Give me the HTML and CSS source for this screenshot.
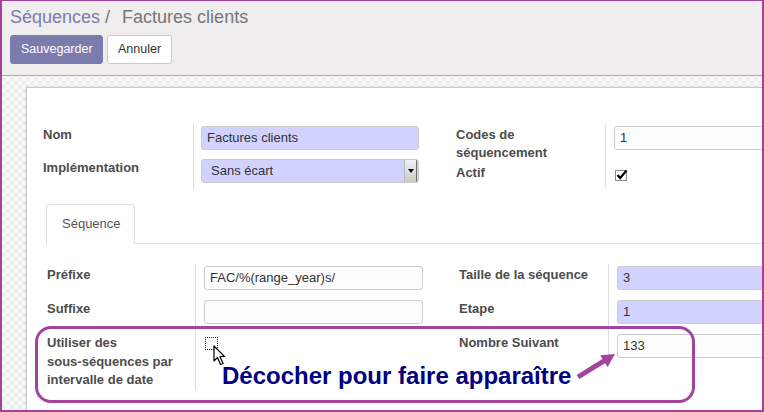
FILE: index.html
```html
<!DOCTYPE html>
<html lang="fr">
<head>
<meta charset="utf-8">
<title>Séquences / Factures clients</title>
<link rel="stylesheet" href="styles.css">
</head>
<body>
<div class="frame">
  <header class="cp">
    <div class="bc"><span class="bc-link">Séquences</span> /<span class="bc-cur">Factures clients</span></div>
    <div class="btns">
      <button class="btn btn-primary">Sauvegarder</button>
      <button class="btn">Annuler</button>
    </div>
  </header>
  <main class="view">
    <div class="sheet">
      <div class="groups g-top">
        <div class="grp grp-l">
          <div class="lbl">Nom</div>
          <div class="fld"><div class="inp req">Factures clients</div></div>
          <div class="lbl">Implémentation</div>
          <div class="fld">
            <div class="inp req sel"><span class="sel-txt">Sans écart</span><span class="sel-btn"><span class="tri"></span></span></div>
          </div>
        </div>
        <div class="grp grp-r">
          <div class="lbl">Codes de séquencement</div>
          <div class="fld"><div class="inp">1</div></div>
          <div class="lbl">Actif</div>
          <div class="fld">
            <svg class="chk" width="13" height="12" viewBox="0 0 13 12"><rect x="0.5" y="1.5" width="11" height="10" fill="#fff" stroke="#8a8a8a"/><polyline points="2.5,6 5.2,9 11.5,1.5" fill="none" stroke="#000" stroke-width="2.2"/></svg>
          </div>
        </div>
      </div>
      <div class="nb">
        <ul class="tabs"><li class="tab">Séquence</li></ul>
        <div class="pane">
          <div class="groups">
            <div class="grp grp2-l">
              <div class="lbl">Préfixe</div>
              <div class="fld"><div class="inp w219">FAC/%(range_year)s/</div></div>
              <div class="lbl">Suffixe</div>
              <div class="fld"><div class="inp w219"></div></div>
              <div class="lbl"><span class="ln">Utiliser des</span><span class="ln">sous-séquences par</span><span class="ln">intervalle de date</span></div>
              <div class="fld"><div class="cb-focus"></div></div>
            </div>
            <div class="grp grp2-r">
              <div class="lbl">Taille de la séquence</div>
              <div class="fld"><div class="inp req">3</div></div>
              <div class="lbl">Etape</div>
              <div class="fld"><div class="inp req">1</div></div>
              <div class="lbl">Nombre Suivant</div>
              <div class="fld"><div class="inp">133</div></div>
            </div>
          </div>
        </div>
      </div>
    </div>
  </main>
  <div class="annot"></div>
  <div class="annot-text">Décocher pour faire apparaître</div>
  <svg class="annot-arrow" width="52" height="40" viewBox="0 0 52 40"><line x1="8" y1="32" x2="36" y2="14.6" stroke="#a3439e" stroke-width="5"/><polygon points="45,9 37.6,22 30.2,10.2" fill="#a3439e"/></svg>
  <svg class="cursor" width="13" height="21" viewBox="0 0 13 21"><path d="M1 1 L1 16 L4.5 12.5 L7.5 19.5 L10 18.5 L7 11.5 L11.5 11.5 Z" fill="#fff" stroke="#000" stroke-width="1.2" stroke-linejoin="round"/></svg>
</div>
</body>
</html>
```

FILE: styles.css
```css
html, body {
  margin: 0;
  padding: 0;
  background: #fff;
}

.frame {
  position: relative;
  width: 764px;
  height: 412px;
  box-sizing: border-box;
  border: 2px solid #a3429d;
  border-top-width: 1px;
  overflow: hidden;
  font-family: "Liberation Sans", Arial, sans-serif;
  background-color: #fbfbfb;
  background-image: conic-gradient(#ececec 25%, #fbfbfb 0 50%, #ececec 0 75%, #fbfbfb 0);
  background-size: 8px 8px;
}

/* control panel */
.cp {
  background: #efedee;
  border-bottom: 1px solid #acaaab;
  padding: 5px 8px 11px;
}

.bc {
  font-size: 18px;
  line-height: 22px;
  color: #777;
  white-space: nowrap;
}

.bc-link {
  color: #7c7bad;
}

.bc-cur {
  margin-left: 12px;
}

.btns {
  margin-top: 7px;
  display: flex;
  gap: 4px;
}

.btn {
  font-family: "Liberation Sans", Arial, sans-serif;
  font-size: 12.5px;
  line-height: 17px;
  padding: 5px 10px;
  border: 1px solid #ccc;
  border-radius: 3px;
  background: #fff;
  color: #333;
  margin: 0;
}

.btn-primary {
  background: #7c7bad;
  border-color: #7c7bad;
  color: #fff;
  width: 93px;
}

/* view */
.view {
  padding: 11px 0 0 24px;
}

.sheet {
  background: #fff;
  border: 1px solid #c9c9c9;
  border-right: none;
  box-shadow: 0 0 3px rgba(0, 0, 0, 0.12);
  width: 1000px;
  height: 400px;
  padding: 36px 16px 0;
  box-sizing: border-box;
}

.groups {
  display: flex;
  gap: 37px;
  align-items: flex-start;
}

.grp {
  display: grid;
}

.grp-l { grid-template-columns: 150px 226px; }
.grp-r { grid-template-columns: 149px 300px; }
.grp2-l { grid-template-columns: 148px 227px; }
.grp2-r { grid-template-columns: 149px 300px; }

.lbl {
  font-size: 13px;
  line-height: 18px;
  font-weight: bold;
  color: #4c4c4c;
  padding: 2px 8px 0 0;
}

.grp2-l .lbl, .grp2-r .lbl {
  line-height: 18.5px;
}

.ln {
  display: block;
  white-space: nowrap;
}

.fld {
  border-left: 1px solid #ddd;
  padding: 2px 0 7px 7px;
}

.grp-r .fld { padding-left: 8px; }
.grp2-l .fld, .grp2-r .fld { padding: 2px 0 8px 8px; }

.inp {
  box-sizing: border-box;
  width: 218px;
  height: 24px;
  border: 1px solid #ccc;
  border-radius: 3px;
  padding: 0 5px;
  font-size: 13px;
  line-height: 22px;
  color: #333;
  background: #fcfcfc;
  white-space: nowrap;
  overflow: hidden;
}

.w219 { width: 219px; }

.grp-r .inp, .grp2-r .inp { width: 300px; }

.req {
  background: #d2d2ff;
}

.sel {
  display: flex;
  padding: 0 1px 0 9px;
}

.sel-txt {
  flex: 1;
}

.sel-btn {
  width: 13px;
  height: 22px;
  box-sizing: border-box;
  background: linear-gradient(#f2f2f2, #c9c9c9);
  border-left: 1px solid #b8b8b8;
  border-right: 1px solid #6f6f6f;
  display: flex;
  align-items: center;
  justify-content: center;
}

.tri {
  width: 0;
  height: 0;
  border-left: 3.5px solid transparent;
  border-right: 3.5px solid transparent;
  border-top: 4px solid #111;
}

.chk {
  display: block;
  margin: 5px 0 0 1px;
}

.cb-focus {
  width: 11px;
  height: 11px;
  border: 1px dotted #222;
  margin: 3px 0 0 1px;
}

/* notebook */
.nb {
  margin-top: 14px;
}

.tabs {
  list-style: none;
  margin: 0 0 0 3px;
  padding: 0;
  display: flex;
  border-bottom: 1px solid #ddd;
}

.tab {
  font-size: 13px;
  line-height: 18px;
  color: #555;
  padding: 10px 15px;
  border: 1px solid #ddd;
  border-bottom-color: transparent;
  border-radius: 4px 4px 0 0;
  background: #fff;
  margin-bottom: -1px;
  width: 57px;
}

.pane {
  padding: 20px 0 0 4px;
}

/* annotation overlay */
.annot {
  position: absolute;
  left: 33px;
  top: 325px;
  width: 660px;
  height: 77px;
  box-sizing: border-box;
  border: 3px solid #a3439e;
  border-radius: 16px;
}

.annot-text {
  position: absolute;
  left: 220px;
  top: 361px;
  font-size: 24px;
  line-height: 28px;
  font-weight: bold;
  color: #000080;
  white-space: nowrap;
}

.annot-arrow {
  position: absolute;
  left: 568px;
  top: 344px;
}

.cursor {
  position: absolute;
  left: 211px;
  top: 344px;
}
```
